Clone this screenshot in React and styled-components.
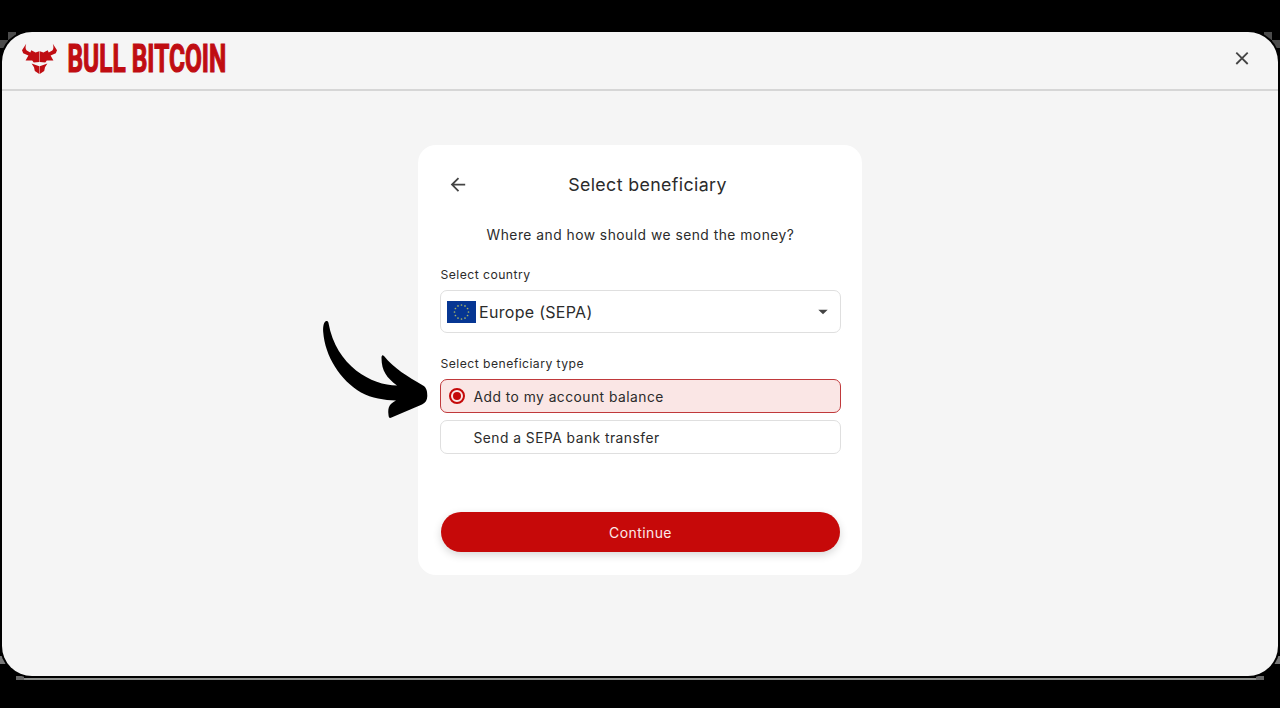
import React from "react";
import styled, { createGlobalStyle } from "styled-components";

const GlobalStyle = createGlobalStyle`
  * { box-sizing: border-box; }
  body { margin: 0; background: #000; color: #2b2b2b; font-family: Inter, "Liberation Sans", sans-serif; }
`;

const Page = styled.div`
  position: relative;
  height: 708px;
  padding: 32px 2px;
  overflow: hidden;
`;

const Backdrop = styled.svg`
  position: absolute;
  inset: 0;
`;

const Window = styled.div`
  position: relative;
  height: 644px;
  border-radius: 30px;
  background: #f5f5f5;
  box-shadow: 0 0 0 2px #000;
  display: flex;
  flex-direction: column;
`;

const Header = styled.header`
  height: 59px;
  flex: none;
  display: flex;
  align-items: flex-start;
  justify-content: space-between;
  padding: 4px 26px 0 17px;
  border-bottom: 2px solid #d6d6d6;
`;

const CloseButton = styled.button`
  border: 0;
  padding: 0;
  margin-top: 12px;
  width: 20px;
  height: 20px;
  background: none;
`;

const Main = styled.main`
  flex: 1;
  display: flex;
  justify-content: center;
  align-items: flex-start;
  padding-top: 54px;
`;

const Card = styled.section`
  position: relative;
  width: 444px;
  height: 430px;
  padding: 22px 21px 0 22px;
  border-radius: 18px;
  background: #fff;
  display: flex;
  flex-direction: column;
`;

const TitleRow = styled.div`
  height: 36px;
  display: grid;
  grid-template-columns: 36px 1fr 22px;
  align-items: center;
`;

const BackButton = styled.button`
  border: 0;
  padding: 0;
  width: 36px;
  height: 36px;
  background: none;
`;

const Title = styled.h1`
  margin: 0;
  text-align: center;
  font-size: 17.8px;
  line-height: 24px;
  font-weight: 400;
  letter-spacing: 0.38px;
`;

const Question = styled.p`
  margin: 22px 0 0;
  text-align: center;
  font-size: 13.8px;
  line-height: 20px;
  letter-spacing: 0.5px;
`;

const Label = styled.div`
  margin-top: ${(p) => p.$top}px;
  padding-left: 0.5px;
  height: 16px;
  font-size: 12.2px;
  line-height: 16px;
  letter-spacing: 0.45px;
`;

const Select = styled.div`
  height: 43px;
  margin-top: ${(p) => p.$top}px;
  padding: 0 11px 0 6px;
  border: 1px solid #dfdfdf;
  border-radius: 7px;
  display: flex;
  align-items: center;
  gap: 3px;
`;

const SelectValue = styled.span`
  flex: 1;
  font-size: 16px;
  line-height: 24px;
  padding-top: 1px;
  letter-spacing: 0.3px;
`;

const Option = styled.div`
  height: 34px;
  margin-top: 7px;
  padding-left: 8px;
  border: 1px solid ${(p) => (p.$selected ? "#c0393b" : "#dfdfdf")};
  border-radius: 7px;
  background: ${(p) => (p.$selected ? "#fae6e5" : "#fff")};
  display: flex;
  align-items: center;
  gap: 8.5px;
`;

const Radio = styled.span`
  width: 16px;
  height: 16px;
  border: 2px solid ${(p) => (p.$selected ? "#c50909" : "transparent")};
  border-radius: 50%;
  display: grid;
  place-items: center;

  &::after {
    content: "";
    width: 8px;
    height: 8px;
    border-radius: 50%;
    background: ${(p) => (p.$selected ? "#c50909" : "transparent")};
  }
`;

const OptionText = styled.span`
  font-size: 13.8px;
  line-height: 20px;
  padding-top: 2px;
  letter-spacing: 0.48px;
`;

const Continue = styled.button`
  height: 40px;
  margin: 58px 1px 0;
  border: 0;
  border-radius: 20px;
  background: #c60909;
  color: #fbe9e9;
  font: 400 14px/20px Inter, sans-serif;
  letter-spacing: 0.4px;
  padding: 2px 0 0;
  box-shadow: 0 3px 8px rgba(0, 0, 0, 0.16);
`;

const Pointer = styled.svg`
  position: absolute;
  left: -97px;
  top: 174px;
`;

const stars = Array.from({ length: 12 }, (_, i) => {
  const a = (i * Math.PI) / 6;
  return [14.5 + 7 * Math.sin(a), 11 - 7 * Math.cos(a)];
});

const halfBull =
  "M7.200 3.800L3 10.200L4.200 13.200L9.400 15.400L6.600 20.600L13.200 20.600L14.700 22.600L20.300 22V11.200L16.500 12.600L12.300 10.200L11.300 12.400L7.700 10.600C6.300 9 6.300 6.700 7.200 3.800Z";
const halfJaw = "M12.600 23.600L20.300 26.200V34L15.800 31L15 27.200Z";

function Logo() {
  return (
    <svg width="220" height="50" viewBox="0 -4 220 50" fill="#c00d12">
      <path d={halfBull} />
      <path d={halfJaw} />
      <g transform="translate(41 0) scale(-1 1)">
        <path d={halfBull} />
        <path d={halfJaw} />
      </g>
      <text
        x="0"
        y="32.300"
        fontFamily="Roboto, sans-serif"
        fontWeight="700"
        fontSize="38.500"
        textLength="270"
        lengthAdjust="spacingAndGlyphs"
        transform="translate(48.500 0) scale(.588 1)"
        stroke="#c00d12"
        strokeWidth="1.200"
      >
        BULL BITCOIN
      </text>
    </svg>
  );
}

function Flag() {
  return (
    <svg width="29" height="22" viewBox="0 0 29 22">
      <rect width="29" height="22" fill="#063693" />
      {stars.map(([x, y], i) => (
        <circle key={i} cx={x} cy={y} r="0.85" fill="#a5b267" />
      ))}
    </svg>
  );
}

export default function App() {
  return (
    <>
      <GlobalStyle />
      <Page>
        <Backdrop width="1280" height="708">
          <path d="M8 32h8v8H8zM0 40h8v8H0zM1264 32h8v8h-8zM1272 40h8v8h-8z" fill="#4b4b4b" />
          <path d="M0 656h8v8H0zM1272 656h8v8h-8z" fill="#777" />
          <path d="M16 678h1248v2H16z" fill="#8f918f" />
          <path d="M16 676h8v4h-8zM1256 676h8v4h-8z" fill="#686868" />
        </Backdrop>
        <Window>
          <Header>
            <Logo />
            <CloseButton aria-label="Close">
              <svg width="20" height="20" viewBox="0 0 20 20" fill="none" stroke="#444" strokeWidth="1.8">
                <path d="M4.300 4.600L15.700 16M15.700 4.600L4.300 16" />
              </svg>
            </CloseButton>
          </Header>
          <Main>
            <Card>
              <TitleRow>
                <BackButton aria-label="Back">
                  <svg width="36" height="36" viewBox="0 0 36 36" fill="none" stroke="#444" strokeWidth="1.800">
                    <path d="M25.200 17.600H12M18.500 11.100L12 17.600L18.500 24.100" />
                  </svg>
                </BackButton>
                <Title>Select beneficiary</Title>
              </TitleRow>
              <Question>Where and how should we send the money?</Question>
              <Label $top={22}>Select country</Label>
              <Select $top={7}>
                <Flag />
                <SelectValue>Europe (SEPA)</SelectValue>
                <svg width="12" height="8" viewBox="0 0 12 8">
                  <path d="M1.300 1.700H10.700L6 6.300Z" fill="#444" />
                </svg>
              </Select>
              <Label $top={23}>Select beneficiary type</Label>
              <Option $selected>
                <Radio $selected />
                <OptionText>Add to my account balance</OptionText>
              </Option>
              <Option>
                <Radio />
                <OptionText>Send a SEPA bank transfer</OptionText>
              </Option>
              <Continue>Continue</Continue>
              <Pointer width="108" height="102" viewBox="0 0 108 102">
                <path d="M5.500 2C3 2 1.800 7 2.200 13C4 37 19 61 40 73.500C51 79.500 63 81 75 81.500C69 85 66.500 87 67.500 96C67.700 98.500 68.500 99.500 70.500 98.500L101 85.500C104.500 84 106.300 81 106.300 77C106.300 72 105.500 68.500 102 66.500C86 57 73 49.500 63 37C61 35 60.500 37 60.500 39C60.500 52 66 59 76 66.500C51 66.500 15 47 7.500 4C7.200 2.500 6.500 2 5.500 2Z" />
              </Pointer>
            </Card>
          </Main>
        </Window>
      </Page>
    </>
  );
}
